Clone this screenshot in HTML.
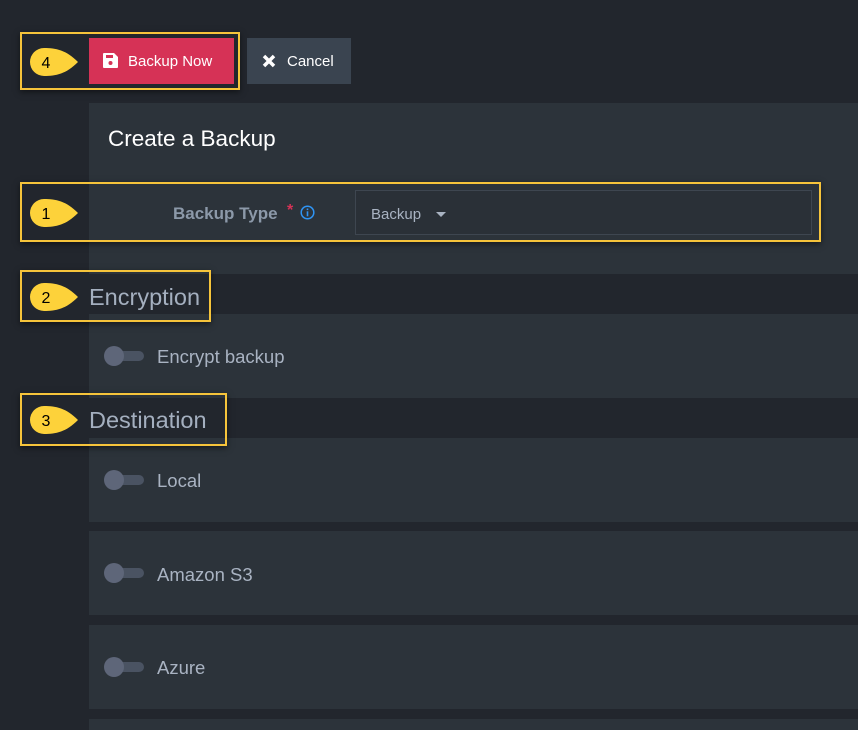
<!DOCTYPE html><html><head><style>
html,body{margin:0;width:858px;height:730px;overflow:hidden}
body{background:#22262d;font-family:"Liberation Sans",sans-serif;position:relative}
.a{position:absolute}
.p{position:absolute;left:89px;right:0;background:#2c333a}
.box{position:absolute;border:2px solid #f6c43b;box-sizing:border-box;box-shadow:0 2px 6px rgba(0,0,0,.5)}
.tg{position:absolute;left:104px;width:40px;height:20px}
.tg:before{content:"";position:absolute;left:12px;top:5px;width:28px;height:10px;border-radius:5px;background:#4a5362}
.tg:after{content:"";position:absolute;left:0;top:0;width:20px;height:20px;border-radius:50%;background:#5e6679}
.lb{position:absolute;left:157px;color:#a9b3c2;font-size:18.5px}
.h{position:absolute;left:89px;color:#a4afbf;font-size:23.5px}
</style></head><body>
<div class="p" style="top:103px;height:171px"></div>
<div class="p" style="top:314px;height:84px"></div>
<div class="p" style="top:438px;height:84px"></div>
<div class="p" style="top:531px;height:84px"></div>
<div class="p" style="top:625px;height:84px"></div>
<div class="p" style="top:719px;height:11px"></div>

<div class="a" style="left:89px;top:38px;width:145px;height:46px;background:#d63256;color:#fff;font-size:15px;line-height:48px">
<svg class="a" style="left:14px;top:15px" width="15" height="15" viewBox="0 0 15 15"><path d="M0 1a1 1 0 0 1 1-1h10l4 4v10a1 1 0 0 1-1 1H1a1 1 0 0 1-1-1z" fill="#fff"/><rect x="3" y="2" width="7" height="3" fill="#d63256"/><circle cx="7.5" cy="10" r="2" fill="#d63256"/></svg>
<span class="a" style="left:39px">Backup Now</span></div>
<div class="a" style="left:247px;top:38px;width:104px;height:46px;background:#3a4450;color:#fff;font-size:15px;line-height:48px">
<svg class="a" style="left:15px;top:16px" width="14" height="14" viewBox="0 0 14 14"><path d="M2 2L12 12M12 2L2 12" stroke="#fff" stroke-width="3.5"/></svg>
<span class="a" style="left:40px">Cancel</span></div>

<div class="a" style="left:108px;top:126px;color:#fff;font-size:22.5px">Create a Backup</div>
<div class="a" style="left:173px;top:204px;color:#8c99a9;font-size:17px;font-weight:bold">Backup Type</div>
<div class="a" style="left:287px;top:202px;color:#d63256;font-size:16px;font-weight:bold">*</div>
<svg class="a" style="left:300px;top:205px" width="15" height="15" viewBox="0 0 15 15"><circle cx="7.5" cy="7.5" r="6.3" fill="none" stroke="#2f95f5" stroke-width="1.5"/><rect x="6.7" y="6.3" width="1.6" height="5" fill="#2f95f5"/><rect x="6.7" y="3.5" width="1.6" height="1.6" fill="#2f95f5"/></svg>
<div class="a" style="left:355px;top:190px;width:457px;height:45px;box-sizing:border-box;border:1px solid #3e4650;background:#2a3037"></div>
<div class="a" style="left:371px;top:206px;color:#a9b3c2;font-size:15px">Backup</div>
<div class="a" style="left:436px;top:212px;width:0;height:0;border-left:5px solid transparent;border-right:5px solid transparent;border-top:5px solid #a9b3c2"></div>

<div class="h" style="top:284px">Encryption</div>
<div class="h" style="top:407px">Destination</div>
<div class="tg" style="top:346px"></div><div class="lb" style="top:346px">Encrypt backup</div>
<div class="tg" style="top:470px"></div><div class="lb" style="top:470px">Local</div>
<div class="tg" style="top:563px"></div><div class="lb" style="top:564px">Amazon S3</div>
<div class="tg" style="top:657px"></div><div class="lb" style="top:657px">Azure</div>

<div class="box" style="left:20px;top:32px;width:220px;height:58px"></div>
<div class="box" style="left:20px;top:182px;width:801px;height:60px"></div>
<div class="box" style="left:20px;top:270px;width:191px;height:52px"></div>
<div class="box" style="left:20px;top:393px;width:207px;height:53px"></div>

<svg class="a" style="left:26px;top:46px" width="54" height="32"><path d="M52 16C40 4 30 2 18 2A14 14 0 0 0 18 30C30 30 40 28 52 16Z" fill="#fdd23a"/><text x="20" y="22" font-size="16" font-family="Liberation Sans" fill="#000" text-anchor="middle">4</text></svg>
<svg class="a" style="left:26px;top:197px" width="54" height="32"><path d="M52 16C40 4 30 2 18 2A14 14 0 0 0 18 30C30 30 40 28 52 16Z" fill="#fdd23a"/><text x="20" y="22" font-size="16" font-family="Liberation Sans" fill="#000" text-anchor="middle">1</text></svg>
<svg class="a" style="left:26px;top:281px" width="54" height="32"><path d="M52 16C40 4 30 2 18 2A14 14 0 0 0 18 30C30 30 40 28 52 16Z" fill="#fdd23a"/><text x="20" y="22" font-size="16" font-family="Liberation Sans" fill="#000" text-anchor="middle">2</text></svg>
<svg class="a" style="left:26px;top:404px" width="54" height="32"><path d="M52 16C40 4 30 2 18 2A14 14 0 0 0 18 30C30 30 40 28 52 16Z" fill="#fdd23a"/><text x="20" y="22" font-size="16" font-family="Liberation Sans" fill="#000" text-anchor="middle">3</text></svg>
</body></html>
